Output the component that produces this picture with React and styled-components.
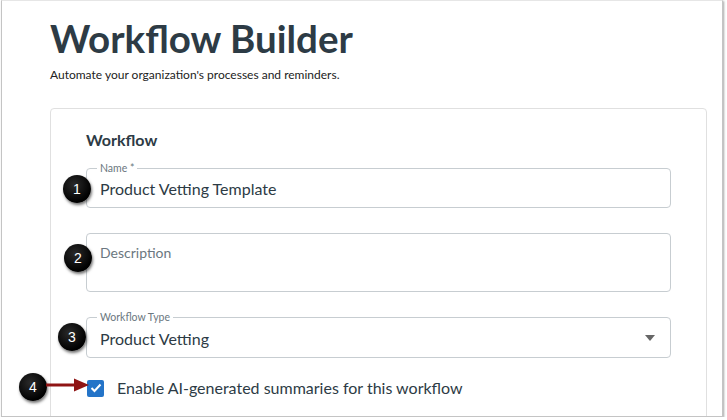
import React from 'react';
import styled, { createGlobalStyle } from 'styled-components';

const GlobalStyle = createGlobalStyle`
  body {
    margin: 0;
    background: #fff;
    font-family: Lato, "Open Sans", sans-serif;
  }
`;

const Frame = styled.div`
  position: relative;
  box-sizing: border-box;
  margin-left: 1px;
  width: 722px;
  height: 417px;
  border: 1px solid #c4c4c4;
  border-top-color: #e6e6e6;
  box-shadow: 1px 1px 2px rgba(0, 0, 0, 0.35);
  overflow: hidden;
  padding: 17px 0 0 48px;
  background: #fff;
`;

const Title = styled.h1`
  margin: 0;
  font-size: 38.5px;
  line-height: 41px;
  font-weight: 700;
  color: #2d3b45;
`;

const Subtitle = styled.p`
  margin: 8px 0 0;
  font-size: 12px;
  line-height: 16px;
  color: #222;
`;

const Card = styled.div`
  box-sizing: border-box;
  width: 657px;
  height: 340px;
  margin-top: 25px;
  padding: 21px 35px 0;
  border: 1px solid #e0e0e0;
  border-radius: 4px;
  display: flex;
  flex-direction: column;
`;

const Heading = styled.h2`
  margin: 0 0 18px;
  font-size: 16px;
  line-height: 20px;
  font-weight: 700;
  color: #2d3b45;
`;

const Field = styled.div`
  position: relative;
  box-sizing: border-box;
  height: ${(p) => p.$h}px;
  margin-bottom: ${(p) => p.$mb}px;
  padding: 0 13px;
  border: 1px solid #c7cdd1;
  border-radius: 4px;
  display: flex;
  align-items: ${(p) => (p.$top ? 'flex-start' : 'center')};
  justify-content: space-between;
`;

const FloatLabel = styled.span`
  position: absolute;
  top: -7px;
  left: 10px;
  padding: 0 3px;
  background: #fff;
  font-size: 10.5px;
  line-height: 12px;
  color: #6b7780;
`;

const Value = styled.span`
  font-size: 16px;
  line-height: 20px;
  color: #2d3b45;
  padding-top: 2px;
`;

const Placeholder = styled.span`
  margin-top: 10px;
  font-size: 14px;
  line-height: 18px;
  color: #6b7780;
`;

const Caret = styled.svg`
  width: 10px;
  height: 6px;
  margin-right: 2px;
`;

const CheckRow = styled.label`
  display: flex;
  align-items: center;
  gap: 13px;
  margin-left: 1px;
  font-size: 16px;
  line-height: 18px;
  color: #2d3b45;
`;

const Box = styled.span`
  width: 17px;
  height: 17px;
  border-radius: 2px;
  background: #2474c8;
  display: flex;
  align-items: center;
  justify-content: center;
`;

const Callout = styled.div`
  position: absolute;
  left: ${(p) => p.$x - 16}px;
  top: ${(p) => p.$y - 15}px;
  width: 28px;
  height: 28px;
  border-radius: 50%;
  background: radial-gradient(circle at 40% 35%, #2a2a2a, #000 70%);
  box-shadow: 1px 2px 3px rgba(0, 0, 0, 0.55);
  color: #fff;
  font-family: "Liberation Sans", Arial, sans-serif;
  font-size: 14px;
  display: flex;
  align-items: center;
  justify-content: center;
`;

const Arrow = styled.svg`
  position: absolute;
  left: 44px;
  top: 376px;
`;

export default function App() {
  return (
    <>
      <GlobalStyle />
      <Frame>
        <Title>Workflow Builder</Title>
        <Subtitle>Automate your organization's processes and reminders.</Subtitle>
        <Card>
          <Heading>Workflow</Heading>
          <Field $h={40} $mb={25}>
            <FloatLabel>Name *</FloatLabel>
            <Value>Product Vetting Template</Value>
          </Field>
          <Field $h={59} $mb={25} $top>
            <Placeholder>Description</Placeholder>
          </Field>
          <Field $h={41} $mb={21}>
            <FloatLabel>Workflow Type</FloatLabel>
            <Value>Product Vetting</Value>
            <Caret viewBox="0 0 10 6">
              <path d="M0 0 L10 0 L5 6 Z" fill="#666" />
            </Caret>
          </Field>
          <CheckRow>
            <Box>
              <svg width="12" height="10" viewBox="0 0 12 10">
                <path d="M1.5 5 L4.5 8 L10.5 1.5" stroke="#fff" strokeWidth="2" fill="none" />
              </svg>
            </Box>
            Enable AI-generated summaries for this workflow
          </CheckRow>
        </Card>
        <Callout $x={77} $y={189}>1</Callout>
        <Callout $x={78} $y={258}>2</Callout>
        <Callout $x={72} $y={337}>3</Callout>
        <Callout $x={33} $y={387}>4</Callout>
        <Arrow width="44" height="16" viewBox="0 0 44 16">
          <path d="M0 8 L30 8" stroke="#8f1414" strokeWidth="3" />
          <path d="M28 1.5 L43 8 L28 14.5 Z" fill="#8f1414" />
        </Arrow>
      </Frame>
    </>
  );
}
